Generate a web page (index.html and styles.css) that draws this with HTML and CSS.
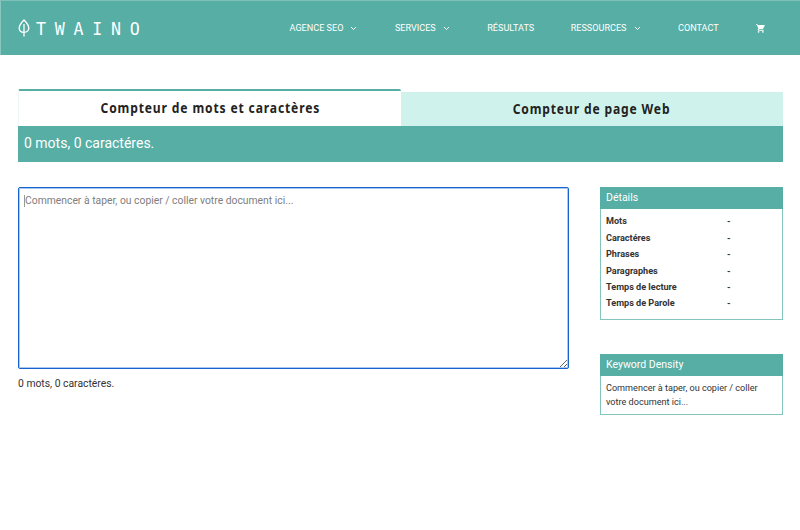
FILE: index.html
```html
<!DOCTYPE html>
<html lang="fr">
<head>
<meta charset="utf-8">
<title>Compteur de mots et caractères</title>
<link rel="stylesheet" href="styles.css">
</head>
<body>
<header class="header">
  <a class="logo">
    <svg class="leaf" viewBox="0 0 12 18" width="12" height="18"><path d="M6 1C3.500 3.500 1.200 6.300 1.200 9c0 2.600 1.800 4.300 4.800 4.300s4.800-1.700 4.800-4.300C10.800 6.300 8.500 3.500 6 1zM6 5v12.500"/></svg>
    <span class="brand">TWAINO</span>
  </a>
  <nav class="nav">
    <a class="n1">AGENCE SEO</a>
    <svg class="chev" viewBox="0 0 7 5"><path d="M1 1l2.500 2.500L6 1"/></svg>
    <a class="n2">SERVICES</a>
    <svg class="chev" viewBox="0 0 7 5"><path d="M1 1l2.500 2.500L6 1"/></svg>
    <a class="n3">RÉSULTATS</a>
    <a class="n4">RESSOURCES</a>
    <svg class="chev" viewBox="0 0 7 5"><path d="M1 1l2.500 2.500L6 1"/></svg>
    <a class="n5">CONTACT</a>
    <svg class="cart" viewBox="1 2 21 20"><path d="M7 18c-1.100 0-2 .9-2 2s.9 2 2 2 2-.9 2-2-.9-2-2-2zM1 2v2h2l3.600 7.600-1.400 2.400C4.500 15.400 5.500 17 7 17h12v-2H7.400l1.100-2h7.500c.7 0 1.400-.4 1.700-1l3.600-6.500C21.700 4.800 21.200 4 20.400 4H5.200l-.9-2zM17 18c-1.100 0-2 .9-2 2s.9 2 2 2 2-.9 2-2-.9-2-2-2z"/></svg>
  </nav>
</header>
<main class="main">
  <div class="tabs">
    <div class="tab active"><span class="label">Compteur de mots et caractères</span></div>
    <div class="tab"><span class="label">Compteur de page Web</span></div>
  </div>
  <div class="summary">0 mots, 0 caractéres.</div>
  <div class="columns">
    <section class="editor">
      <div class="field">
        <textarea class="input" placeholder="Commencer à taper, ou copier / coller votre document ici..."></textarea>
        <span class="caret"></span>
      </div>
      <p class="count">0 mots, 0 caractéres.</p>
    </section>
    <aside class="side">
      <section class="panel details">
        <h2>Détails</h2>
        <dl>
          <dt>Mots</dt><dd>-</dd>
          <dt>Caractéres</dt><dd>-</dd>
          <dt>Phrases</dt><dd>-</dd>
          <dt>Paragraphes</dt><dd>-</dd>
          <dt>Temps de lecture</dt><dd>-</dd>
          <dt>Temps de Parole</dt><dd>-</dd>
        </dl>
      </section>
      <section class="panel density">
        <h2>Keyword Density</h2>
        <p>Commencer à taper, ou copier / coller<br>votre document ici...</p>
      </section>
    </aside>
  </div>
</main>
</body>
</html>
```
FILE: styles.css
```css
* { box-sizing: border-box; }
body { margin: 0; background: #fff; color: #333; font-family: Roboto, sans-serif; overflow: hidden; }
h2, p, dl, dd { margin: 0; }
.header { display: flex; align-items: center; height: 55px; padding: 0 30px 0 17px; background: #56aea4; border-top: 1px solid #7fc1b9; border-left: 1px solid #8ac6bf; color: #fff; }
.logo { display: flex; align-items: center; gap: 6px; width: 271.500px; padding-top: 2px; }
.leaf { flex: none; fill: none; stroke: #fff; stroke-width: 1.300; margin: -2px 0 0; }
.brand { font: 18.500px/20px "DejaVu Sans Mono", monospace; letter-spacing: 9.700px; transform: scaleX(.9); transform-origin: left; }
.nav { display: flex; align-items: center; flex: 1; font-size: 9.100px; line-height: 12px; white-space: nowrap; }
.nav a { flex: none; }
.chev { flex: none; width: 7px; height: 5px; fill: none; stroke: #fff; stroke-width: 1; margin: 0 37.500px 0 7px; }
.n3 { margin-right: 36.500px; }
.n5 { margin-right: 37px; }
.cart { flex: none; width: 9px; height: 9px; fill: #fff; }
.main { width: 765px; margin: 35px 0 0 18px; }
.tabs { display: flex; height: 36px; }
.tab { flex: 1; margin-top: 2px; background: #cff3ec; color: #222; text-align: center; font: bold 14px/33px "Noto Sans", sans-serif; letter-spacing: 1px; }
.tab.active { margin-top: -1px; background: #fff; border-top: 2px solid #56aea4; border-left: 1px solid #eef7f6; border-radius: 2px 2px 0 0; }
.label { display: inline-block; transform: scaleX(.862); }
.summary { height: 36px; padding-left: 6px; background: #56aea4; color: #fff; font-size: 14px; line-height: 35px; }
.columns { display: flex; justify-content: space-between; margin-top: 25px; }
.editor { width: 551px; }
.field { position: relative; }
.caret { position: absolute; left: 6px; top: 8px; width: 1px; height: 12px; background: #999; }
.input { display: block; width: 551px; height: 182px; padding: 5px 6px; border: 1.500px solid #1765cc; border-radius: 2px; outline: 0; box-shadow: inset 0 0 0 1px #a9c8f2; font: 10.350px/15px Roboto, sans-serif; resize: both; }
.input::placeholder { color: #808080; }
.count { margin-top: 7px; font-size: 10.350px; line-height: 15px; }
.side { width: 183px; }
.panel { border: 1px solid #83c4bd; }
.panel h2 { height: 22px; margin: -1px -1px 0; padding-left: 6px; background: #56aea4; color: #fff; font-size: 10.500px; font-weight: 400; line-height: 22px; }
.details { height: 133px; }
.details dl { display: grid; grid-template-columns: 121px 1fr; padding: 4.300px 5px 0; font-size: 9.100px; font-weight: 700; line-height: 16.400px; }
.density { height: 61px; margin-top: 34px; }
.density p { padding: 6px 5px 0; font-size: 9.100px; line-height: 13.500px; }
```
